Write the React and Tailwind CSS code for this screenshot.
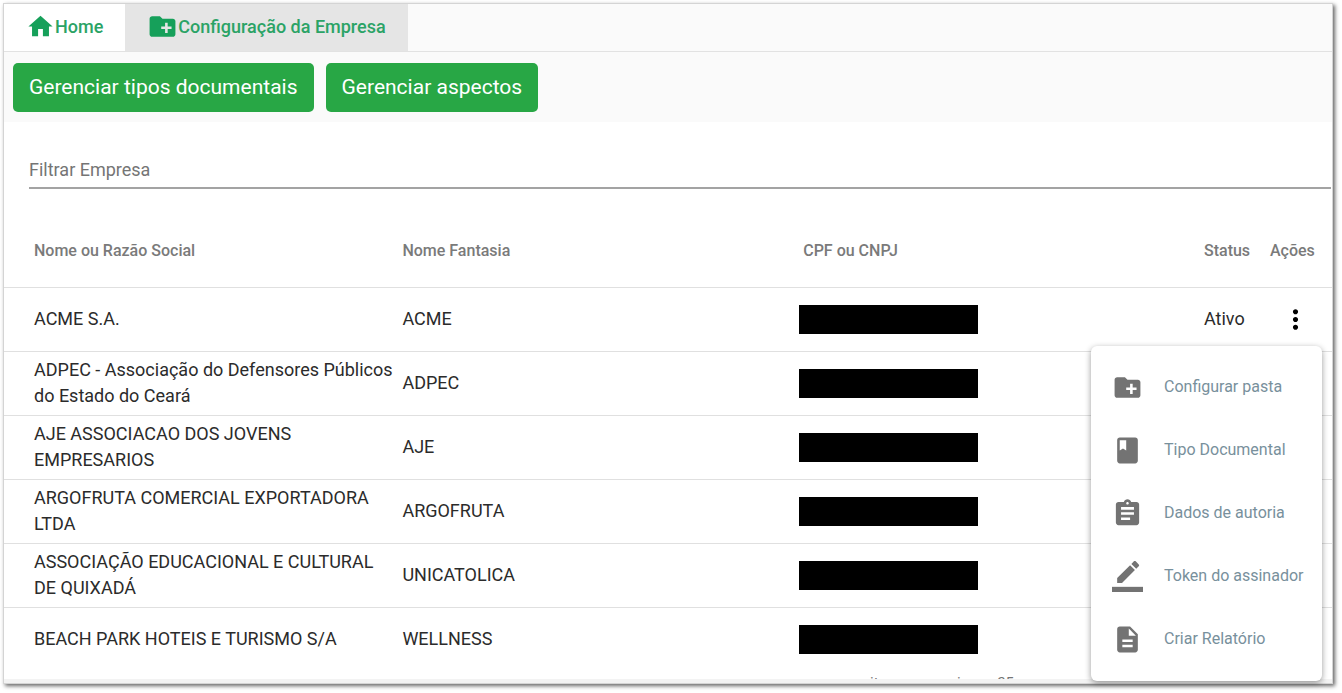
import { useState } from 'react'
import {
  MdAssignment,
  MdBook,
  MdCreateNewFolder,
  MdDescription,
  MdHome,
  MdMoreVert,
} from 'react-icons/md'

const companies = [
  { name: 'ACME S.A.', alias: 'ACME', status: 'Ativo' },
  {
    name: 'ADPEC - Associação do Defensores Públicos do Estado do Ceará',
    alias: 'ADPEC',
  },
  { name: 'AJE ASSOCIACAO DOS JOVENS EMPRESARIOS', alias: 'AJE' },
  { name: 'ARGOFRUTA COMERCIAL EXPORTADORA LTDA', alias: 'ARGOFRUTA' },
  {
    name: 'ASSOCIAÇÃO EDUCACIONAL E CULTURAL DE QUIXADÁ',
    alias: 'UNICATOLICA',
  },
  { name: 'BEACH PARK HOTEIS E TURISMO S/A', alias: 'WELLNESS' },
]

function PenLineIcon({ className }) {
  return (
    <svg viewBox="0 0 24 24" fill="currentColor" className={className}>
      <path d="M17.75 7L14 3.25l-10 10V17h3.75l10-10zm2.96-2.96c.39-.39.39-1.02 0-1.41L18.37.29c-.39-.39-1.02-.39-1.41 0L15 2.25 18.75 6l1.96-1.96z" />
      <path d="M0 20h24v4H0z" />
    </svg>
  )
}

const menuItems = [
  { label: 'Configurar pasta', Icon: MdCreateNewFolder },
  { label: 'Tipo Documental', Icon: MdBook },
  { label: 'Dados de autoria', Icon: MdAssignment },
  { label: 'Token do assinador', Icon: PenLineIcon },
  { label: 'Criar Relatório', Icon: MdDescription },
]

function Tabs() {
  return (
    <nav className="flex h-12 border-b border-[#e2e2e2] bg-[#fafafa] text-[18px] font-medium text-[#2ba366]">
      <a href="#home" className="flex items-center bg-white px-[22px] pb-0.5">
        <MdHome className="size-[29px] text-[#16a05a]" />
        Home
      </a>
      <a
        href="#empresa"
        className="flex items-center bg-[#e5e5e5] px-[22px] pb-0.5"
      >
        <MdCreateNewFolder className="size-[31px] text-[#16a05a]" />
        Configuração da Empresa
      </a>
    </nav>
  )
}

function ActionButton({ children }) {
  return (
    <button className="h-[49px] rounded-[5px] bg-[#28a745] px-4 text-[21px] text-white">
      {children}
    </button>
  )
}

function ActionsMenu() {
  return (
    <div
      role="menu"
      className="absolute top-[58px] right-[10px] z-10 w-[231px] rounded-md bg-white py-2.5 shadow-[0_2px_6px_rgba(0,0,0,0.4)]"
    >
      {menuItems.map(({ label, Icon }) => (
        <button
          key={label}
          role="menuitem"
          className="flex h-[63px] w-full items-center gap-[21px] pl-[21px] text-[16px] whitespace-nowrap text-[#78909c]"
        >
          <Icon className="size-[31px] shrink-0 text-[#737373]" />
          {label}
        </button>
      ))}
    </div>
  )
}

function CompanyRow({ company, menuOpen, onToggle }) {
  return (
    <tr className="h-16 border-t border-[#e0e0e0]">
      <td className="pr-1 pl-[30px]">{company.name}</td>
      <td>{company.alias}</td>
      <td>
        <div className="-ml-1 h-[29px] w-[179px] bg-black" />
      </td>
      <td>{company.status}</td>
      <td className="relative">
        <button
          aria-label="Ações"
          onClick={onToggle}
          className="flex w-[50px] justify-center"
        >
          <MdMoreVert className="size-[31px] text-black" />
        </button>
        {menuOpen && <ActionsMenu />}
      </td>
    </tr>
  )
}

function App() {
  const [openRow, setOpenRow] = useState(0)
  const [filter, setFilter] = useState('')

  return (
    <div className="pt-[3px] pr-[9px] pb-2 pl-[3px] font-[Roboto,sans-serif]">
      <main className="border border-[#d4d4d4] bg-white shadow-[2px_2px_4px_rgba(0,0,0,0.6)]">
        <Tabs />

        <div className="flex gap-3 bg-[#fafafa] px-[9px] pt-[11px] pb-2.5">
          <ActionButton>Gerenciar tipos documentais</ActionButton>
          <ActionButton>Gerenciar aspectos</ActionButton>
        </div>

        <div className="pt-[29px] pr-px pl-[25px]">
          <input
            aria-label="Filtrar Empresa"
            placeholder="Filtrar Empresa"
            value={filter}
            onChange={(e) => setFilter(e.target.value)}
            className="block h-[38px] w-full border-b-2 border-[#a3a3a3] text-[18px] outline-none placeholder:text-[#757575]"
          />
        </div>

        <table className="mt-6 w-full table-fixed text-left text-[18px] leading-[26px] text-[#2b2b2b]">
          <colgroup>
            <col className="w-[30%]" />
            <col />
            <col />
            <col className="w-[66px]" />
            <col className="w-[62px]" />
          </colgroup>
          <thead>
            <tr className="h-[74px] text-[16px] text-[#7a7a7a]">
              <th className="pt-0.5 pl-[30px] font-medium">
                Nome ou Razão Social
              </th>
              <th className="pt-0.5 font-medium">Nome Fantasia</th>
              <th className="pt-0.5 font-medium">CPF ou CNPJ</th>
              <th className="pt-0.5 font-medium">Status</th>
              <th className="pt-0.5 font-medium">Ações</th>
            </tr>
          </thead>
          <tbody>
            {companies.map((company, i) => (
              <CompanyRow
                key={company.name}
                company={company}
                menuOpen={openRow === i}
                onToggle={() => setOpenRow(openRow === i ? null : i)}
              />
            ))}
          </tbody>
        </table>

        {/* paginator, cut off by the bottom edge */}
        <div className="flex h-2 items-start justify-end gap-5 overflow-hidden pt-px pr-[318px] text-[15px] text-[#757575]">
          <span>itens por pagina</span>
          <span>25</span>
        </div>
        <div className="h-1 bg-[#f3f3f3]" />
      </main>
    </div>
  )
}

export default App
